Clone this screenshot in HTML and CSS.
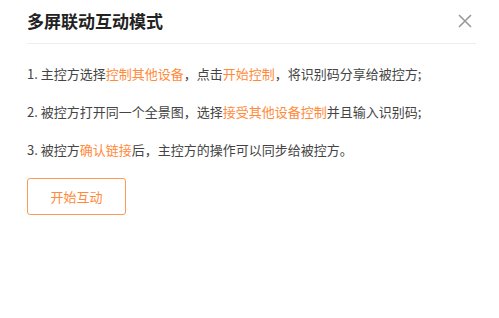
FILE: index.html
```html
<!DOCTYPE html>
<html lang="zh">
<head>
<meta charset="utf-8">
<link rel="stylesheet" href="styles.css">
</head>
<body>
<div class="dialog">
  <div class="header">
    <h1 class="title">多屏联动互动模式</h1>
    <button class="close" aria-label="关闭">
      <svg width="14" height="14" viewBox="0 0 14 14"><path d="M1 1L13 13M13 1L1 13" stroke="#999" stroke-width="1.6" fill="none"/></svg>
    </button>
  </div>
  <div class="body">
    <p class="step">1. 主控方选择<span class="hl">控制其他设备</span>，点击<span class="hl">开始控制</span>，将识别码分享给被控方;</p>
    <p class="step">2. 被控方打开同一个全景图，选择<span class="hl">接受其他设备控制</span>并且输入识别码;</p>
    <p class="step">3. 被控方<span class="hl">确认链接</span>后，主控方的操作可以同步给被控方。</p>
    <button class="start">开始互动</button>
  </div>
</div>
</body>
</html>
```
FILE: styles.css
```css
html, body {
  margin: 0;
  padding: 0;
  background: #fff;
  font-family: "Noto Sans CJK SC", "Noto Sans", sans-serif;
}
.dialog {
  width: 499px;
  height: 318px;
  box-sizing: border-box;
  padding: 0 23px 0 27px;
}
.header {
  display: flex;
  justify-content: space-between;
  align-items: center;
  height: 43px;
  border-bottom: 1px solid #eeeeee;
}
.title {
  margin: 0;
  font-size: 17px;
  font-weight: bold;
  color: #222;
  line-height: 24px;
  margin-top: -2px;
}
.close {
  border: none;
  background: none;
  padding: 0;
  width: 14px;
  height: 14px;
  margin-right: 4px;
  margin-top: -2px;
  cursor: pointer;
  display: flex;
}
.body {
  padding-top: 20px;
}
.step {
  margin: 0 0 19px;
  font-size: 13px;
  line-height: 19px;
  color: #444;
}
.hl {
  color: #ff8a3a;
}
.start {
  display: block;
  margin-top: 0;
  width: 99px;
  height: 37px;
  border: 1px solid #ff9a55;
  border-radius: 3px;
  background: #fff;
  color: #ff8a3a;
  font-family: inherit;
  font-size: 13px;
  cursor: pointer;
}
```
